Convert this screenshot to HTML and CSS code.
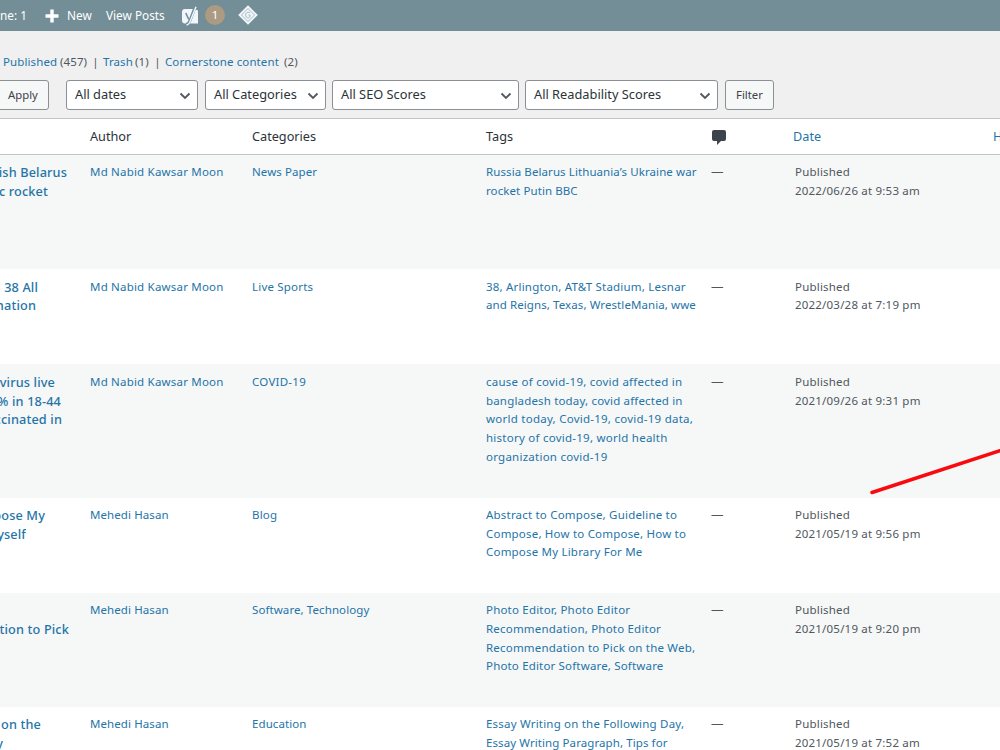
FILE: index.html
```html
<!DOCTYPE html>
<html lang="en">
<head>
<meta charset="utf-8">
<title>Posts</title>
<link rel="stylesheet" href="styles.css">
</head>
<body>
<header class="adminbar">
  <span class="online">ne: 1</span>
  <svg class="plus" viewBox="0 0 14 14"><path d="M5.3 0.5h3.4v4.8h4.8v3.4H8.700v4.800H5.300V8.700H.500V5.300h4.800z"/></svg>
  <span class="new">New</span>
  <span class="view">View Posts</span>
  <svg class="yoast" viewBox="0 0 18 20"><path class="fill" d="M4 3h9.500L17 4.500v13H4Q1 17.500 1 14.500V6Q1 3 4 3z"/><path class="cut" d="M4.800 7l3 6.500"/><path class="edge" d="M14 1.500L9 14.500Q7.500 18.500 5 18.500"/><path class="stroke" d="M15 .8L9.500 14.500Q8 18.800 5.500 19"/></svg>
  <span class="badge">1</span>
  <svg class="diamond" viewBox="0 0 20 20"><path class="fill" d="M10 .2L19.800 10 10 19.800 .2 10z"/><path class="ring" d="M10 3.500L16.500 10 10 16.500 3.500 10z"/><path class="ring" d="M12 7.800Q10 6.300 8.300 8t0 4 3.500 0l.4-2H10.500"/></svg>
</header>
<nav class="views"><a class="v1">Published</a><span class="n1">(457)</span><i>|</i><a class="v2">Trash</a><span class="n2">(1)</span><i>|</i><a class="v3">Cornerstone content</a><span class="n3">(2)</span></nav>
<div class="filters">
  <button class="btn apply">Apply</button>
  <div class="select dates"><span>All dates</span><svg viewBox="0 0 12 8"><path d="M1.500 1.500L6 6l4.500-4.500"/></svg></div>
  <div class="select cats"><span>All Categories</span><svg viewBox="0 0 12 8"><path d="M1.500 1.500L6 6l4.500-4.500"/></svg></div>
  <div class="select seo"><span>All SEO Scores</span><svg viewBox="0 0 12 8"><path d="M1.500 1.500L6 6l4.500-4.500"/></svg></div>
  <div class="select read"><span>All Readability Scores</span><svg viewBox="0 0 12 8"><path d="M1.500 1.500L6 6l4.500-4.500"/></svg></div>
  <button class="btn filter">Filter</button>
</div>
<main class="table">
  <div class="row head"><span></span><span>Author</span><span>Categories</span><span>Tags</span><svg class="comment" viewBox="0 0 14 15"><path d="M2 0h10q2 0 2 2v7q0 2-2 2H9l-4 4v-4H2q-2 0-2-2V2q0-2 2-2z"/></svg><a class="date-head">Date</a><a class="last-head">H</a></div>
  <div class="row r1"><div class="title"><b class="w67">nish Belarus</b><b class="w48">ic rocket</b></div><a>Md Nabid Kawsar Moon</a><a class="snug">News Paper</a><a class="snug">Russia Belarus Lithuania’s Ukraine war<br>rocket Putin BBC</a><span class="dash">—</span><span class="date">Published<br>2022/06/26 at 9:53 am</span></div>
  <div class="row r2"><div class="title"><b class="w38">38 All</b><b class="w36">mation</b></div><a>Md Nabid Kawsar Moon</a><a>Live Sports</a><a>38, Arlington, AT&amp;T Stadium, Lesnar<br><span class="snug">and Reigns, Texas, WrestleMania, wwe</span></a><span class="dash">—</span><span class="date">Published<br>2022/03/28 at 7:19 pm</span></div>
  <div class="row r3"><div class="title"><b class="w55">navirus live</b><b class="w61">0% in 18-44</b><b class="w62">accinated in</b></div><a>Md Nabid Kawsar Moon</a><a class="wide">COVID-19</a><a class="wide">cause of covid-19, covid affected in<br><span class="mid">bangladesh today, covid affected in</span><br>world today, Covid-19, covid-19 data,<br>history of covid-19, world health<br>organization covid-19</a><span class="dash">—</span><span class="date">Published<br>2021/09/26 at 9:31 pm</span></div>
  <div class="row r4"><div class="title"><b class="w45">pose My</b><b class="w26">myself</b></div><a class="snug">Mehedi Hasan</a><a>Blog</a><a>Abstract to Compose, Guideline to<br>Compose, How to Compose, How to<br>Compose My Library For Me</a><span class="dash">—</span><span class="date">Published<br>2021/05/19 at 9:56 pm</span></div>
  <div class="row r5"><div class="title"><b>&nbsp;</b><b class="w69">ation to Pick</b></div><a class="snug">Mehedi Hasan</a><a class="snug">Software, Technology</a><a>Photo Editor, Photo Editor<br>Recommendation, Photo Editor<br>Recommendation to Pick on the Web,<br><span class="mid">Photo Editor Software, Software</span></a><span class="dash">—</span><span class="date">Published<br>2021/05/19 at 9:20 pm</span></div>
  <div class="row r6"><div class="title"><b class="w41">on the</b><b class="w3">y</b></div><a class="snug">Mehedi Hasan</a><a class="snug">Education</a><a>Essay Writing on the Following Day,<br><span class="snug">Essay Writing Paragraph, Tips for</span></a><span class="dash">—</span><span class="date">Published<br>2021/05/19 at 7:52 am</span></div>
</main>
<svg class="pointer" viewBox="0 0 130 46"><path d="M2 43.500L132 1"/></svg>
</body>
</html>
```

FILE: styles.css
```css
* { box-sizing: border-box; }
body { margin: 0; width: 1000px; height: 750px; overflow: hidden; position: relative; background: #f0f0f1; font: 11.5px/18.65px "Noto Sans", sans-serif; color: #50575e; display: flex; flex-direction: column; }
a { color: #2474a8; text-decoration: none; }
.adminbar { height: 31px; flex: none; background: #738e96; color: #fff; display: flex; align-items: center; font-size: 11.8px; white-space: nowrap; }
.online { width: 45px; }
.plus { width: 14px; height: 14px; fill: #fff; margin-right: 8px; }
.new { width: 39px; }
.view { width: 75px; }
.yoast { width: 18px; height: 20px; }
.adminbar .fill { fill: #f0f6fc; }
.cut, .edge, .ring { fill: none; stroke: #738e96; stroke-width: 1.6; }
.edge { stroke-width: 3; }
.ring { stroke-width: .9; stroke: #9eb5bc; }
.stroke { fill: none; stroke: #f0f6fc; stroke-width: 1.4; }
.badge { width: 20px; height: 20px; margin: 0 13px 1px 6px; border-radius: 50%; background: #ac9a82; text-align: center; line-height: 20px; font-size: 11.5px; }
.diamond { width: 20px; height: 20px; margin-bottom: 1px; }
.views { height: 49px; flex: none; padding: 22px 0 0 3px; display: flex; white-space: nowrap; letter-spacing: .1px; }
.views i { font-style: normal; width: 15px; text-align: center; }
.v1 { width: 57px; }
.n1 { width: 28px; }
.v2 { width: 32px; }
.n2 { width: 15px; }
.v3 { width: 119px; }
.filters { height: 38px; flex: none; display: flex; align-items: flex-start; color: #2c3338; }
.btn, .select { height: 30px; border: 1px solid #8c8f94; border-radius: 3px; }
.btn { font: 11.3px "Noto Sans", sans-serif; color: #3c434a; background: #f6f7f7; padding: 0 0 2px; }
.apply { width: 59px; margin: 0 17px 0 -10px; padding-left: 7px; }
.select { background: #fff; display: flex; align-items: center; justify-content: space-between; padding: 0 6px 1px 8px; font-size: 12.8px; white-space: nowrap; margin-right: 7px; }
.select svg { width: 12px; height: 8px; margin-top: 3px; fill: none; stroke: #50575e; stroke-width: 1.8; }
.dates { width: 132px; }
.cats { width: 121px; margin-right: 6px; }
.seo { width: 187px; margin-right: 6px; }
.read { width: 193px; }
.filter { width: 49px; }
.table { background: #fff; border-top: 1px solid #c3c4c7; }
.row { display: grid; grid-template-columns: 90px 162px 234px 225px 84px 198px 7px; padding-top: 8px; white-space: nowrap; letter-spacing: .2px; }
.row:nth-child(even) { background: #f6f7f7; }
.head { height: 36px; padding-top: 0; align-items: center; border-bottom: 1px solid #c3c4c7; font-size: 12.7px; color: #2c3338; letter-spacing: 0; }
.snug { letter-spacing: .09px; }
.mid { letter-spacing: .17px; }
.wide { letter-spacing: .25px; }
.comment { width: 14px; height: 15px; margin: 1px 0 0 1px; fill: #3c434a; }
.date-head { margin-left: -2px; }
.dash { font-size: 12.5px; }
.r1 { height: 114px; }
.r2 { height: 95px; padding-top: 8.5px; }
.r3 { height: 133.500px; padding-top: 9px; }
.r4 { height: 95.500px; padding-top: 8.500px; }
.r5 { height: 114px; padding-top: 8.300px; }
.r6 { height: 60px; }
.title { display: flex; flex-direction: column; align-items: flex-start; }
.title b { display: flex; justify-content: flex-end; overflow: hidden; font-size: 12.7px; font-weight: 500; color: #2474a8; letter-spacing: .15px; }
.w67 { width: 67px; }
.w48 { width: 48px; }
.w38 { width: 38px; }
.w36 { width: 36px; }
.w55 { width: 55px; }
.w61 { width: 61px; }
.w62 { width: 62px; }
.w45 { width: 45px; }
.w26 { width: 26px; }
.w69 { width: 69px; }
.w41 { width: 41px; }
.w3 { width: 3px; }
.pointer { position: absolute; left: 870px; top: 449px; width: 130px; height: 46px; fill: none; stroke: #f80a0e; stroke-width: 3.5; stroke-linecap: round; }
```
